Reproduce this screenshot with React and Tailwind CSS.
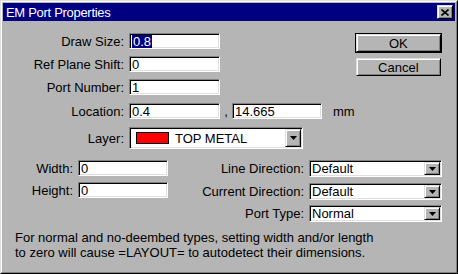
import React from "react";

const sunken =
  "bg-white border border-t-[#808080] border-l-[#808080] border-r-white border-b-white shadow-[inset_1px_1px_0_#000,inset_-1px_-1px_0_#dfdfdf]";
const raised =
  "bg-[#b5b5b5] border border-t-[#dfdfdf] border-l-[#dfdfdf] border-r-black border-b-black shadow-[inset_1px_1px_0_#fff,inset_-1px_-1px_0_#808080]";

const TextBox = ({ w, children }) => (
  <div className={`${sunken} ${w} h-[16px] flex items-center pl-[2px] leading-none`}>
    {children}
  </div>
);

const Arrow = () => (
  <div className={`${raised} w-[16px] h-full flex items-center justify-center`}>
    <svg width="7" height="4" viewBox="0 0 7 4">
      <polygon points="0,0 7,0 3.5,4" fill="#000" />
    </svg>
  </div>
);

const Select = ({ w, h = "h-[17px]", children }) => (
  <div className={`${sunken} ${w} ${h} flex items-stretch p-px`}>
    <div className="flex-1 flex items-center pl-[1px] leading-none">{children}</div>
    <Arrow />
  </div>
);

const Row = ({ label, className = "", children }) => (
  <div className={`flex items-center leading-none ${className}`}>
    <div className="w-[122px] text-right pr-[1px]">{label}</div>
    <div className="ml-[4px] flex items-center">{children}</div>
  </div>
);

export default function App() {
  return (
    <div className="w-[458px] h-[274px] bg-[#b5b5b5] border border-t-[#dfdfdf] border-l-[#dfdfdf] border-r-black border-b-black font-['Liberation_Sans',Arial,sans-serif] text-[13px] text-black overflow-hidden">
      <div className="h-full border border-t-white border-l-white border-r-[#808080] border-b-[#808080] p-px flex flex-col">
        {/* title bar */}
        <div className="h-[18px] bg-[#000080] flex items-center justify-between pl-[3px] pr-[2px]">
          <span className="text-white text-[13px] leading-none tracking-[-0.3px]">EM Port Properties</span>
          <div className={`${raised} w-[16px] h-[14px] flex items-center justify-center`}>
            <svg width="8" height="7" viewBox="0 0 8 7">
              <path d="M0.5 0.5 L7.5 6.5 M7.5 0.5 L0.5 6.5" stroke="#000" strokeWidth="1.6" />
            </svg>
          </div>
        </div>

        {/* top section */}
        <div className="flex mt-[12px]">
          <div className="flex-1 flex flex-col">
            <Row label="Draw Size:" className="h-[16px]">
              <TextBox w="w-[91px]">
                <span className="bg-[#000080] text-white px-[1px]">0.8</span>
              </TextBox>
            </Row>
            <Row label="Ref Plane Shift:" className="h-[16px] mt-[7px]">
              <TextBox w="w-[91px]">0</TextBox>
            </Row>
            <Row label="Port Number:" className="h-[16px] mt-[7px]">
              <TextBox w="w-[91px]">1</TextBox>
            </Row>
            <Row label="Location:" className="h-[16px] mt-[8px]">
              <TextBox w="w-[91px]">0.4</TextBox>
              <span className="w-[12px] text-center">,</span>
              <TextBox w="w-[90px]">14.665</TextBox>
              <span className="ml-[11px]">mm</span>
            </Row>
            <Row label="Layer:" className="h-[22px] mt-[8px]">
              <Select w="w-[174px]" h="h-[22px]">
                <div className="w-[33px] h-[12px] bg-[#ff0000] border border-black ml-[4px]" />
                <span className="ml-[6px]">TOP METAL</span>
              </Select>
            </Row>
          </div>
          <div className="w-[89px] mr-[13px] flex flex-col items-stretch leading-none">
            <div className="border border-black">
              <div className={`${raised} h-[18px] flex items-center justify-center`}>OK</div>
            </div>
            <div className={`${raised} h-[18px] mt-[5px] mx-px flex items-center justify-center`}>
              Cancel
            </div>
          </div>
        </div>

        {/* bottom section */}
        <div className="flex mt-[11px] leading-none">
          <div className="w-[165px] flex flex-col">
            <div className="flex items-center h-[16px]">
              <div className="w-[70px] text-right">Width:</div>
              <div className="ml-[5px]">
                <TextBox w="w-[90px]">0</TextBox>
              </div>
            </div>
            <div className="flex items-center h-[16px] mt-[6px]">
              <div className="w-[70px] text-right">Height:</div>
              <div className="ml-[5px]">
                <TextBox w="w-[90px]">0</TextBox>
              </div>
            </div>
          </div>
          <div className="flex flex-col">
            <div className="flex items-center h-[17px]">
              <div className="w-[136px] text-right">Line Direction:</div>
              <div className="ml-[5px]">
                <Select w="w-[133px]">Default</Select>
              </div>
            </div>
            <div className="flex items-center h-[17px] mt-[6px]">
              <div className="w-[136px] text-right">Current Direction:</div>
              <div className="ml-[5px]">
                <Select w="w-[133px]">Default</Select>
              </div>
            </div>
            <div className="flex items-center h-[17px] mt-[5px]">
              <div className="w-[136px] text-right">Port Type:</div>
              <div className="ml-[5px]">
                <Select w="w-[133px]">Normal</Select>
              </div>
            </div>
          </div>
        </div>

        <p className="mt-[8px] ml-[12px] leading-[15px]">
          For normal and no-deembed types, setting width and/or length
          <br />
          to zero will cause =LAYOUT= to autodetect their dimensions.
        </p>
      </div>
    </div>
  );
}
